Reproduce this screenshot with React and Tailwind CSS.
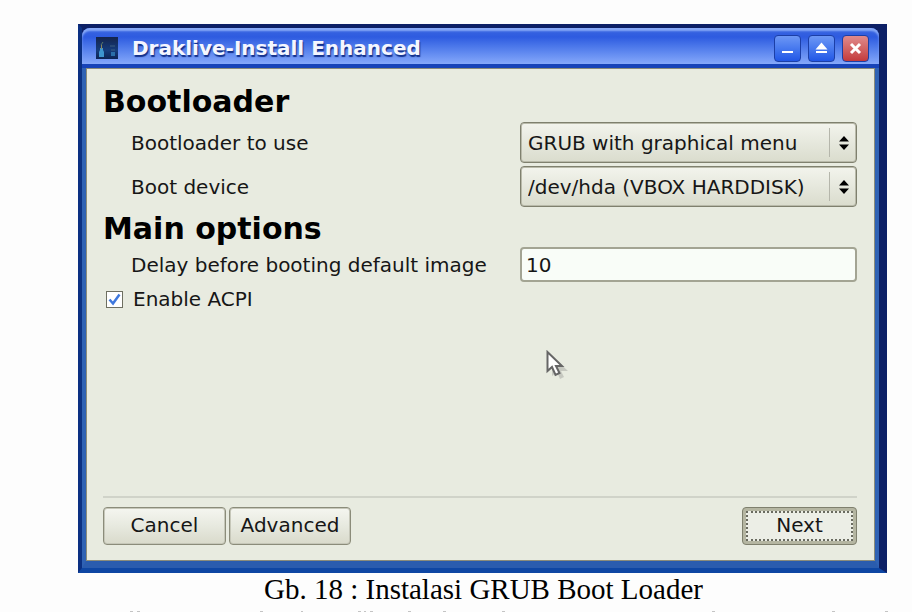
import { useState } from 'react'

const BOOTLOADERS = ['GRUB with graphical menu', 'GRUB with text menu', 'LILO with text menu']
const DEVICES = ['/dev/hda (VBOX HARDDISK)']

// tops of the next paragraph's tall letters, cut off by the page edge: [x, width]
const NEXT_LINE = [
  [130, 3], [137, 3], [260, 3], [301, 2], [358, 3], [364, 2], [370, 3],
  [408, 3], [443, 3], [502, 3], [712, 3], [832, 3], [885, 3],
]

const buttonClass =
  'h-[38px] rounded border border-[#8b8c7a] bg-linear-to-b from-[#f5f6f0] via-[#e7e9df] to-[#d9dacb] pb-0.5 text-center text-xl shadow-[inset_0_0_0_1px_#c6c7b9]'

const captionClass =
  'flex h-[27px] w-[27px] items-center justify-center rounded border border-[#1c3fa6] text-white'

function Select({ id, options, value, onChange }) {
  return (
    <div className="relative">
      <select
        id={id}
        value={value}
        onChange={(event) => onChange(event.target.value)}
        className="block h-[41px] w-full appearance-none rounded border border-[#7f806e] bg-linear-to-b from-[#f3f4ed] via-[#e6e8dd] to-[#dadccd] pr-8 pl-[7px] text-xl text-[#161616] shadow-[inset_0_0_0_1px_#b9baaa]"
      >
        {options.map((option) => (
          <option key={option}>{option}</option>
        ))}
      </select>
      <div className="pointer-events-none absolute inset-y-1.5 right-0 flex w-7 items-center justify-center border-l border-[#b5b6ab]">
        <svg width="10" height="16" viewBox="0 0 10 16">
          <path d="M0 6.500 5 1l5 5.500zM0 9.500h10L5 15z" fill="#000" />
        </svg>
      </div>
    </div>
  )
}

function TitleBar() {
  return (
    <header className="flex h-10 items-center rounded-t-lg border-b-4 border-[#1743b8] bg-linear-to-b from-[#3a66e0] via-[#2e5be0] via-25% to-[#86a8fa] pt-1 pr-2.5 pl-3.5 shadow-[inset_0_3px_2px_#88aaf7]">
      <svg width="22" height="22" viewBox="0 0 22 22">
        <defs>
          <linearGradient id="sky" x1="0" y1="0" x2="0" y2="1">
            <stop offset="0" stopColor="#14244c" />
            <stop offset=".6" stopColor="#153c7c" />
            <stop offset="1" stopColor="#0d2454" />
          </linearGradient>
        </defs>
        <rect width="22" height="22" fill="url(#sky)" />
        <path d="M4 11h3v2l1 2v5H3v-5l1-2z" fill="#3d95cf" />
        <path d="M5 8h1v4H5z" fill="#8a865c" />
        <path d="m5 8 2-3" stroke="#5c7a6a" />
        <path d="M15 15h4v4h-4z" fill="#2a6ea9" />
        <path d="M14 9h5m-4 4h4" stroke="#3d5f80" />
      </svg>
      <h1 className="ml-3.5 flex-1 text-xl font-bold text-[#f4f6ff] [text-shadow:1px_2px_1px_#12308c]">
        Draklive-Install Enhanced
      </h1>
      <div className="flex gap-[7px]">
        <button type="button" aria-label="Minimize" className={`${captionClass} bg-linear-to-b from-[#6d97f5] to-[#2156e6]`}>
          <svg width="15" height="15" viewBox="0 0 15 15">
            <path d="M2 10h11v2H2z" fill="currentColor" />
          </svg>
        </button>
        <button type="button" aria-label="Maximize" className={`${captionClass} bg-linear-to-b from-[#6d97f5] to-[#2156e6]`}>
          <svg width="15" height="15" viewBox="0 0 15 15">
            <path d="M7.500 1.500 13.500 8.500h-12zM2 10h11v2H2z" fill="currentColor" />
          </svg>
        </button>
        <button type="button" aria-label="Close" className={`${captionClass} bg-linear-to-b from-[#e08a8c] to-[#c3393c]`}>
          <svg width="15" height="15" viewBox="0 0 15 15">
            <path d="m3 3 9 9m0-9-9 9" stroke="currentColor" strokeWidth="3" />
          </svg>
        </button>
      </div>
    </header>
  )
}

export default function App() {
  const [bootloader, setBootloader] = useState(BOOTLOADERS[0])
  const [device, setDevice] = useState(DEVICES[0])
  const [delay, setDelay] = useState('10')
  const [acpi, setAcpi] = useState(true)

  return (
    <div className="h-screen overflow-hidden bg-[#fdfdfd] pt-6 pr-[25px] pl-[78px]">
      <div className="border-t-4 border-r-8 border-b-5 border-l-4 border-[#0d2066] border-b-[#0e46a3] border-l-[#0b3082] bg-[#0d2066] font-['DejaVu_Sans',sans-serif] text-[#161616]">
        <TitleBar />
        <main className="border-x-4 border-b-[7px] border-[#2f62b4] border-b-[#2a5cae] bg-[#e8ebe0] pt-4 pr-[18px] pb-4 pl-[17px] shadow-[inset_0_0_0_1px_#8b8c7a]">
          <form onSubmit={(event) => event.preventDefault()}>
            <h2 className="h-[38px] text-3xl leading-9 font-bold text-black">Bootloader</h2>
            <div className="grid grid-cols-[417px_1fr] items-center gap-y-[3px] text-xl">
              <label htmlFor="bootloader" className="pl-7">Bootloader to use</label>
              <Select id="bootloader" options={BOOTLOADERS} value={bootloader} onChange={setBootloader} />
              <label htmlFor="device" className="pl-7">Boot device</label>
              <Select id="device" options={DEVICES} value={device} onChange={setDevice} />
            </div>
            <h2 className="mt-1 h-9 text-3xl leading-9 font-bold text-black">Main options</h2>
            <div className="grid grid-cols-[417px_1fr] items-center text-xl">
              <label htmlFor="delay" className="pl-7">Delay before booting default image</label>
              <input
                id="delay"
                value={delay}
                onChange={(event) => setDelay(event.target.value)}
                className="h-[35px] w-full rounded border-2 border-[#a3a493] bg-[#f9fdf8] px-1 outline-none"
              />
            </div>
            <label className="mt-[3px] flex h-7 items-center gap-2.5 pl-[3px] text-xl">
              <span className="relative h-[17px] w-[17px]">
                <input
                  type="checkbox"
                  checked={acpi}
                  onChange={(event) => setAcpi(event.target.checked)}
                  className="block h-[17px] w-[17px] appearance-none border border-[#6e6f61] bg-white"
                />
                {acpi && (
                  <svg className="pointer-events-none absolute inset-0" width="17" height="17" viewBox="0 0 17 17">
                    <path d="m3.500 8.500 3.500 4 6.500-9" fill="none" stroke="#3f78dd" strokeWidth="2.500" />
                  </svg>
                )}
              </span>
              Enable ACPI
            </label>
            <div className="mt-[183px] flex gap-[3px] border-t-2 border-[#d0d3c9] pt-[9px]">
              <button type="button" className={`${buttonClass} w-[123px]`}>Cancel</button>
              <button type="button" className={`${buttonClass} w-[122px]`}>Advanced</button>
              <button type="submit" className="ml-auto h-[38px] w-[115px] rounded border border-[#7f806e] bg-[#b5b6a2] p-[3px] text-xl">
                <span className="flex h-full items-center justify-center border-2 border-dotted border-[#6a6b60] bg-[#eceee6] pb-0.5">
                  Next
                </span>
              </button>
            </div>
          </form>
        </main>
      </div>
      <p className="pl-0.5 text-center font-['Liberation_Serif',serif] text-[29px] leading-8 text-black">
        Gb. 18 : Instalasi GRUB Boot Loader
      </p>
      <svg className="pointer-events-none absolute bottom-0 left-0" width="912" height="1" aria-hidden="true">
        {NEXT_LINE.map(([x, width]) => (
          <rect key={x} x={x} width={width} height="1" fill="#c4c4c4" />
        ))}
      </svg>
      <svg className="pointer-events-none absolute top-[350px] left-[546px]" width="26" height="32" viewBox="0 0 26 32" aria-hidden="true">
        <path d="M6 6v20l5-4 3 7 4-2-3-6h7z" fill="#777" opacity=".3" />
        <path d="M1.500 2v19l4.500-4 3.500 8 4-2-3.500-7H16z" fill="#fff" stroke="#666" strokeWidth="2" />
      </svg>
    </div>
  )
}
